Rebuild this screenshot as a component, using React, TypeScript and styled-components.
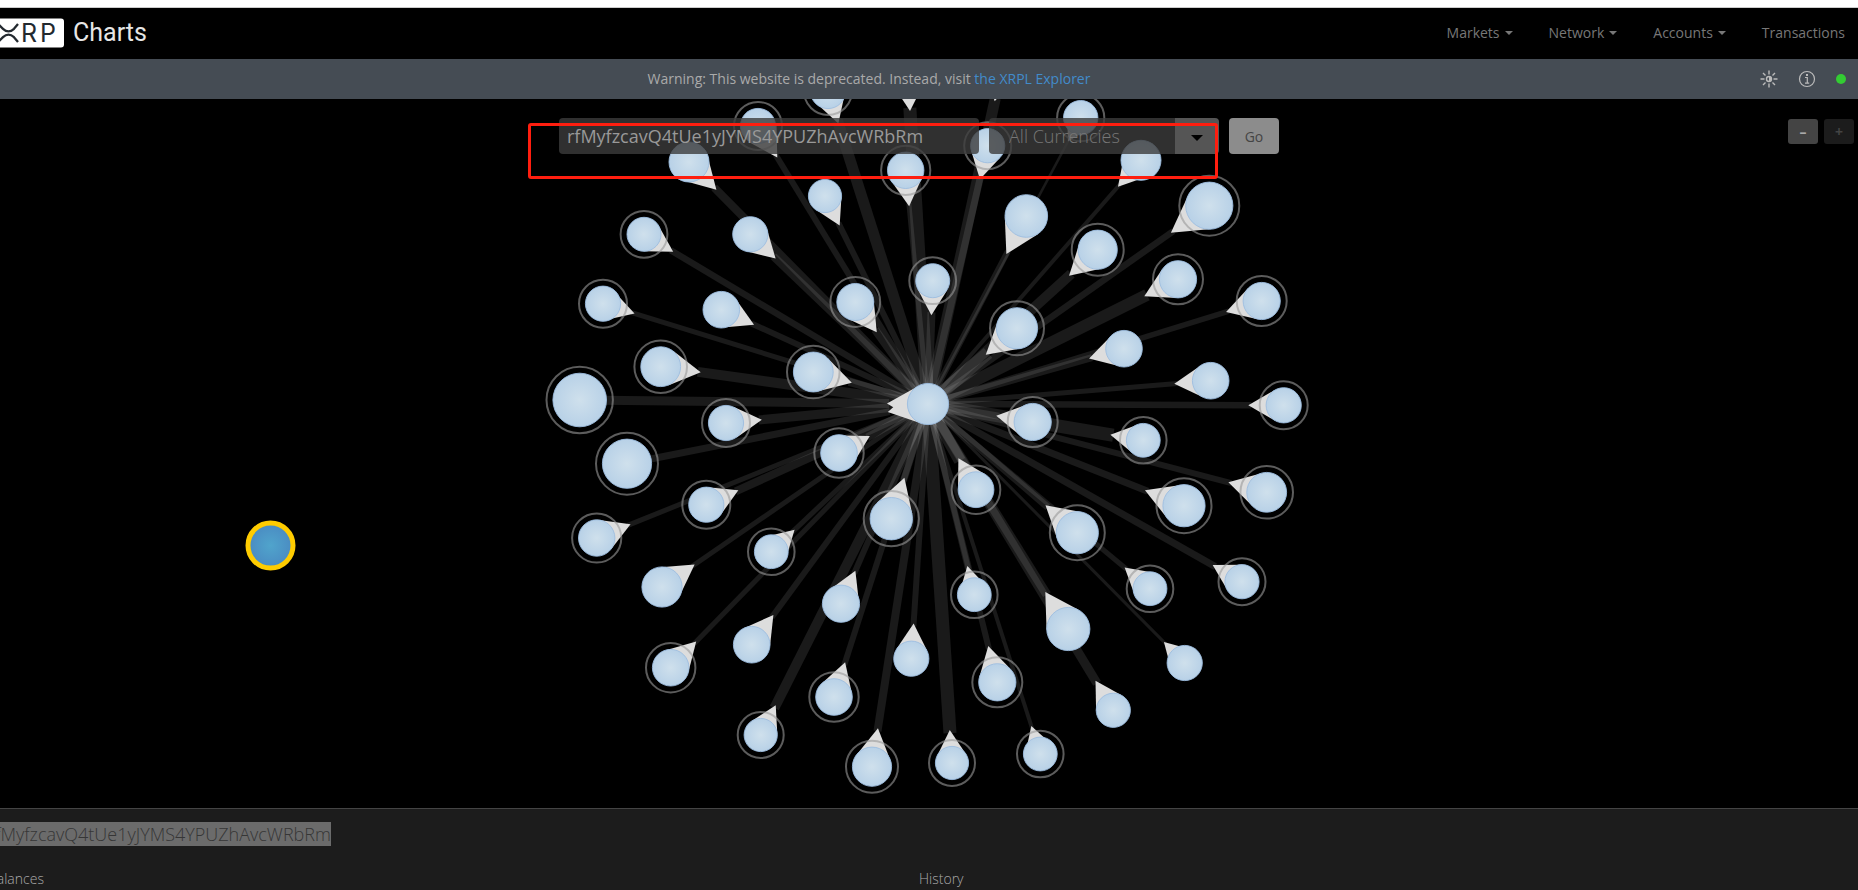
import React from "react";
import styled, { createGlobalStyle } from "styled-components";

const GlobalStyle = createGlobalStyle`
  *, *::before, *::after { box-sizing: border-box; }
  body {
    margin: 0;
    background: #1c1c1c;
    color: #999;
    font-family: "Open Sans", "Noto Sans", sans-serif;
    font-size: 14px;
    line-height: 20px;
    overflow-x: hidden;
  }
  button, input, select { font-family: inherit; }
`;

/* The page is scrolled sideways by its 20px gutter. */
const Shell = styled.div`
  margin-left: -20px;
`;

const TopStrip = styled.div`
  height: 8px;
  background: #fff;
  border-bottom: 1px solid #ccc;
`;

const Navbar = styled.header`
  display: flex;
  align-items: center;
  justify-content: space-between;
  height: 51px;
  padding: 0 13px 2px 0;
  background: #000;
`;

const Brand = styled.a`
  display: flex;
  align-items: center;
  gap: 9px;
  color: #e6e6e6;
  font-family: Roboto, sans-serif;
  font-size: 25px;
  line-height: 30px;
  text-decoration: none;
`;

const Menu = styled.nav`
  display: flex;
  align-items: center;
  gap: 36px;
`;

const MenuLink = styled.a<{ $dropdown?: boolean }>`
  display: flex;
  align-items: center;
  gap: 5px;
  color: #777;
  text-decoration: none;

  &::after {
    content: "";
    display: ${(p) => (p.$dropdown ? "block" : "none")};
    border: 4px solid transparent;
    border-top-color: currentColor;
    border-bottom: 0;
  }
`;

const Banner = styled.div`
  display: flex;
  align-items: center;
  height: 40px;
  padding-right: 12px;
  background: #454c54;
  color: #aaa;
`;

const BannerText = styled.p`
  flex: 1;
  margin: 0;
  text-align: center;

  a { color: #428bca; text-decoration: none; }
`;

const BannerTools = styled.div`
  display: flex;
  align-items: center;
  justify-content: flex-end;
  gap: 20px;
  width: 88px;
`;

const IconButton = styled.button`
  display: flex;
  padding: 0;
  border: 0;
  background: none;
  color: #bbb;
  cursor: pointer;
`;

const StatusDot = styled.span`
  width: 10px;
  height: 10px;
  border-radius: 50%;
  background: #3c3;
`;

const Stage = styled.main`
  position: relative;
  background: #000;
  border-bottom: 1px solid #444;
`;

const GraphSvg = styled.svg`
  display: block;
  width: 100%;
  height: 709px;
`;

const SearchBar = styled.form`
  position: absolute;
  top: 19px;
  left: 0;
  right: 0;
  display: flex;
  justify-content: center;
  gap: 10px;
`;

const AddressInput = styled.input`
  width: 420px;
  height: 36px;
  padding: 0 8px;
  border: 0;
  border-radius: 4px;
  background: rgba(60, 60, 60, 0.8);
  color: #999;
  font-size: 18px;
`;

const CurrencyBox = styled.div`
  display: flex;
  width: 230px;
  height: 36px;
  border-radius: 4px;
  overflow: hidden;
`;

const CurrencySelect = styled.select`
  flex: 1;
  appearance: none;
  padding: 0 20px;
  border: 0;
  border-radius: 0;
  background: rgba(60, 60, 60, 0.8);
  color: #777;
  font-size: 18px;
  font-weight: 300;
`;

const CurrencyToggle = styled.button`
  display: flex;
  align-items: center;
  justify-content: center;
  width: 44px;
  padding: 4px 0 0;
  border: 0;
  background: #555;

  &::after {
    content: "";
    border: 6px solid transparent;
    border-top-color: #000;
    border-bottom: 0;
  }
`;

const GoButton = styled.button`
  width: 50px;
  height: 36px;
  padding: 0;
  border: 0;
  border-radius: 4px;
  background: #8c8c8c;
  color: #444;
  font-size: 14px;
`;

const Highlight = styled.div`
  position: absolute;
  top: 24px;
  left: calc(50% - 391px);
  width: 690px;
  height: 56px;
  border: 3px solid #ff1e0f;
  border-radius: 3px;
  pointer-events: none;
`;

const ZoomControls = styled.div`
  position: absolute;
  top: 20px;
  right: 4px;
  display: flex;
  gap: 6px;
`;

const ZoomButton = styled.button`
  width: 30px;
  height: 25px;
  padding: 0;
  border: 0;
  border-radius: 3px;
  background: #444;
  color: #aaa;
  font-size: 14px;
  font-weight: 700;
  line-height: 25px;

  &:disabled { background: #1c1c1c; color: #444; }
`;

const Details = styled.section`
  padding: 12px 8px 0;
`;

const AccountTitle = styled.h1`
  margin: 0;
  font-size: 18px;
  font-weight: 300;
  line-height: 26px;

  span {
    display: inline-block;
    line-height: 24px;
    background: #6b6b6b;
    color: #363636;
  }
`;

const Columns = styled.div`
  display: grid;
  grid-template-columns: 1fr 1fr;
  padding-top: 22px;
`;

const ColumnTitle = styled.h2`
  margin: 0;
  color: #aaa;
  font-size: 14px;
  font-weight: 300;
  line-height: 20px;
`;

type Account = {
  x: number;
  y: number;
  r: number;
  ring: boolean;
  /* distance from the node's centre to the arrow tip */
  tip: number;
  /* thickness of the link, from the amount sent */
  w: number;
};

const node = (x: number, y: number, r: number, ring: number, tip: number, w: number): Account => ({
  x, y, r, ring: ring === 1, tip, w,
});

const hub = { x: 928, y: 404, r: 21 };

const senders: Account[] = [
  node(758, 126, 18, 1, 37, 6),
  node(828, 91, 18, 1, 34, 11),
  node(908, 78, 18, 0, 33, 13),
  node(1002, 68, 18, 0, 34, 11),
  node(689, 162, 20.4, 0, 39, 8),
  node(825, 196, 17, 0, 33, 6),
  node(905.7, 170.3, 18.6, 1, 36, 5),
  node(644, 234.3, 17.4, 1, 34, 6.5),
  node(750.3, 234.3, 18, 0, 35, 8),
  node(603, 303.7, 18, 1, 33, 5),
  node(721.3, 309.7, 18.7, 0, 36, 6),
  node(855.3, 302, 18.9, 1, 37, 8),
  node(1080.7, 117.7, 17.6, 1, 27, 2.5),
  node(987.7, 145.7, 17.5, 1, 34.5, 7),
  node(1141, 160.3, 20.4, 0, 35, 4),
  node(1026.3, 216, 21.7, 0, 43, 6),
  node(932.7, 280.7, 17.4, 1, 34.6, 8),
  node(1097.7, 249.7, 20, 1, 38.7, 10),
  node(1209.3, 205.7, 24, 1, 47, 6.5),
  node(1178, 279.3, 19, 1, 37.7, 12),
  node(1261.7, 301, 19, 1, 37.3, 5.5),
  node(1017, 328.3, 21, 1, 41, 13),
  node(1124, 348.7, 18.7, 0, 36.3, 7),
  node(1210.7, 380.7, 18.7, 0, 36.5, 5),
  node(1283.7, 405.3, 18, 1, 35.4, 6.5),
  node(1032.7, 422, 19, 1, 37, 7),
  node(1143.3, 440.3, 17.3, 1, 33.4, 13),
  node(1266.7, 492.3, 20.3, 1, 39.6, 6),
  node(1184, 505.7, 21.5, 1, 42, 7),
  node(976, 489.7, 18.3, 1, 36, 12),
  node(1077.3, 532.7, 21.5, 1, 42, 7),
  node(1150, 588.7, 17.3, 1, 33, 5),
  node(1242, 581.7, 17.5, 1, 33.7, 7),
  node(974.3, 594.7, 17.3, 1, 29.5, 6),
  node(1068.3, 629, 22, 0, 43.5, 9),
  node(1184.7, 663, 18, 0, 29.5, 3),
  node(1113.3, 710.3, 17.5, 0, 34.4, 9),
  node(997.3, 682.3, 19, 1, 37.4, 6),
  node(1040.3, 754, 17.3, 1, 29.4, 4),
  node(952, 763, 17, 1, 33, 13),
  node(911.3, 658.7, 18, 0, 35.4, 6),
  node(872, 766.7, 20, 1, 39, 8),
  node(834, 697, 18.7, 1, 36.5, 6),
  node(760.7, 735, 17, 1, 33.3, 10),
  node(841, 603.7, 19, 0, 36, 6),
  node(751.7, 644.7, 18.7, 0, 36.7, 6),
  node(670.7, 667.7, 18.7, 1, 36.5, 5),
  node(662, 587, 20.5, 0, 39.6, 5),
  node(771.3, 551.7, 17.3, 1, 32, 5),
  node(891.3, 518.7, 21.6, 1, 43, 7),
  node(596.7, 538, 18.6, 1, 36.5, 5),
  node(706.3, 504.7, 18, 1, 35.2, 8),
  node(839, 453, 18.7, 1, 35.2, 8),
  node(726, 423, 18, 1, 36, 9),
  node(660.7, 366.7, 20.3, 1, 40.4, 10),
  node(813.3, 372, 20.3, 1, 40, 8),
];

const receivers: Account[] = [
  node(627, 463.7, 25, 1, 41, 7),
  node(579.7, 400, 27.2, 1, 41, 9),
];

type Point = { x: number; y: number };

const along = (from: Point, to: Point, d: number): Point => {
  const len = Math.hypot(to.x - from.x, to.y - from.y);
  return { x: from.x + ((to.x - from.x) * d) / len, y: from.y + ((to.y - from.y) * d) / len };
};

/* Equilateral arrow head, anchored on one node and pointing at another. */
function Arrow({ from, to, tip }: { from: Point; to: Point; tip: number }) {
  const t = along(from, to, tip);
  const b = along(from, to, tip * 0.25);
  const k = (tip * 0.433) / (tip * 0.75);
  const dx = (t.x - b.x) * k;
  const dy = (t.y - b.y) * k;
  return <polygon points={`${t.x},${t.y} ${b.x - dy},${b.y + dx} ${b.x + dy},${b.y - dx}`} fill="#ddd" />;
}

function Link({ from, to, w }: { from: Point; to: Point; w: number }) {
  return <line x1={from.x} y1={from.y} x2={to.x} y2={to.y} stroke="#fff" strokeOpacity={0.1} strokeWidth={w} />;
}

function AccountNode({ x, y, r, ring }: { x: number; y: number; r: number; ring?: boolean }) {
  return (
    <g>
      {ring && <circle cx={x} cy={y} r={r + 6} fill="none" stroke="#999" strokeOpacity={0.6} strokeWidth={2} />}
      <circle cx={x} cy={y} r={r - 0.4} fill="url(#account)" stroke="#9dbde0" strokeWidth={0.9} />
    </g>
  );
}

function Graph() {
  return (
    <GraphSvg viewBox="-20 99 1878 709" preserveAspectRatio="xMidYMid slice" role="img" aria-label="Account network">
      <defs>
        <radialGradient id="account">
          <stop offset="0" stopColor="#cfe0ec" />
          <stop offset="1" stopColor="#b8d1e7" />
        </radialGradient>
        <radialGradient id="selected">
          <stop offset="0" stopColor="#50a4cc" />
          <stop offset="1" stopColor="#4a8bc2" />
        </radialGradient>
      </defs>
      {senders.map((n, i) => <Link key={i} from={along(n, hub, n.tip - 3)} to={hub} w={n.w} />)}
      {receivers.map((n, i) => <Link key={i} from={n} to={along(hub, n, hub.r + 18)} w={n.w} />)}
      {senders.map((n, i) => <Arrow key={i} from={n} to={hub} tip={n.tip} />)}
      {receivers.map((n, i) => <Arrow key={i} from={hub} to={n} tip={n.tip} />)}
      {[...senders, ...receivers].map((n, i) => (
        <AccountNode key={i} x={n.x} y={n.y} r={n.r} ring={n.ring} />
      ))}
      <AccountNode x={hub.x} y={hub.y} r={hub.r} />
      <circle cx={270.5} cy={545.5} r={22.5} fill="url(#selected)" stroke="#fc0" strokeWidth={5} />
    </GraphSvg>
  );
}

function XrpLogo() {
  return (
    <svg width="84" height="30" viewBox="-21 0 84 30" role="img" aria-label="XRP">
      <rect x="-17" y="0.5" width="80" height="29" rx="3" fill="#fff" />
      <g fill="none" stroke="#23292f" strokeWidth="2.300">
        <path d="M-3 6 L2 10.800 Q7.500 16 13 10.800 L17 6" />
        <path d="M-3 24 L2 19.200 Q7.500 14 13 19.200 L17 24" />
      </g>
      <g fill="#23292f" fontFamily="Inter, sans-serif" fontSize="25">
        <text x="20" y="24">R</text>
        <text x="39" y="24">P</text>
      </g>
    </svg>
  );
}

function SunIcon() {
  return (
    <svg width="18" height="18" viewBox="0 0 18 18" fill="none" stroke="currentColor" strokeWidth="1.4" aria-hidden="true">
      <circle cx="9" cy="9" r="2.500" />
      <path d="M9 6.500a2.500 2.500 0 0 1 0 5z" fill="currentColor" stroke="none" />
      <path d="M9 0.500v4M9 13.500v4M0.500 9h4M13.500 9h4M3 3l2.500 2.500M12.500 12.500L15 15M3 15l2.500-2.500M12.500 5.500L15 3" />
    </svg>
  );
}

function InfoIcon() {
  return (
    <svg width="18" height="18" viewBox="0 0 18 18" fill="none" stroke="currentColor" aria-hidden="true">
      <circle cx="9" cy="9" r="7.500" strokeWidth="1.200" />
      <path d="M9 4v2" strokeWidth="2" />
      <path d="M7 7.500h2.300v5.500M7 13.200h4.200" strokeWidth="1.200" />
    </svg>
  );
}

export default function App() {
  return (
    <>
      <GlobalStyle />
      <Shell>
        <TopStrip />
        <Navbar>
          <Brand href="#"><XrpLogo />Charts</Brand>
          <Menu>
            <MenuLink href="#markets" $dropdown>Markets</MenuLink>
            <MenuLink href="#network" $dropdown>Network</MenuLink>
            <MenuLink href="#accounts" $dropdown>Accounts</MenuLink>
            <MenuLink href="#transactions">Transactions</MenuLink>
          </Menu>
        </Navbar>
        <Banner>
          <BannerText>
            Warning: This website is deprecated. Instead, visit <a href="#explorer">the XRPL Explorer</a>
          </BannerText>
          <BannerTools>
            <IconButton type="button" aria-label="Toggle theme"><SunIcon /></IconButton>
            <IconButton type="button" aria-label="Information"><InfoIcon /></IconButton>
            <StatusDot />
          </BannerTools>
        </Banner>
        <Stage>
          <Graph />
          <SearchBar onSubmit={(e) => e.preventDefault()}>
            <AddressInput aria-label="Account address" defaultValue="rfMyfzcavQ4tUe1yJYMS4YPUZhAvcWRbRm" />
            <CurrencyBox>
              <CurrencySelect aria-label="Currency">
                <option>All Currencies</option>
              </CurrencySelect>
              <CurrencyToggle type="button" aria-label="Show currencies" />
            </CurrencyBox>
            <GoButton type="submit">Go</GoButton>
          </SearchBar>
          <Highlight />
          <ZoomControls>
            <ZoomButton type="button" aria-label="Zoom out">–</ZoomButton>
            <ZoomButton type="button" aria-label="Zoom in" disabled>+</ZoomButton>
          </ZoomControls>
        </Stage>
        <Details>
          <AccountTitle><span>rfMyfzcavQ4tUe1yJYMS4YPUZhAvcWRbRm</span></AccountTitle>
          <Columns>
            <ColumnTitle>Balances</ColumnTitle>
            <ColumnTitle>History</ColumnTitle>
          </Columns>
        </Details>
      </Shell>
    </>
  );
}
